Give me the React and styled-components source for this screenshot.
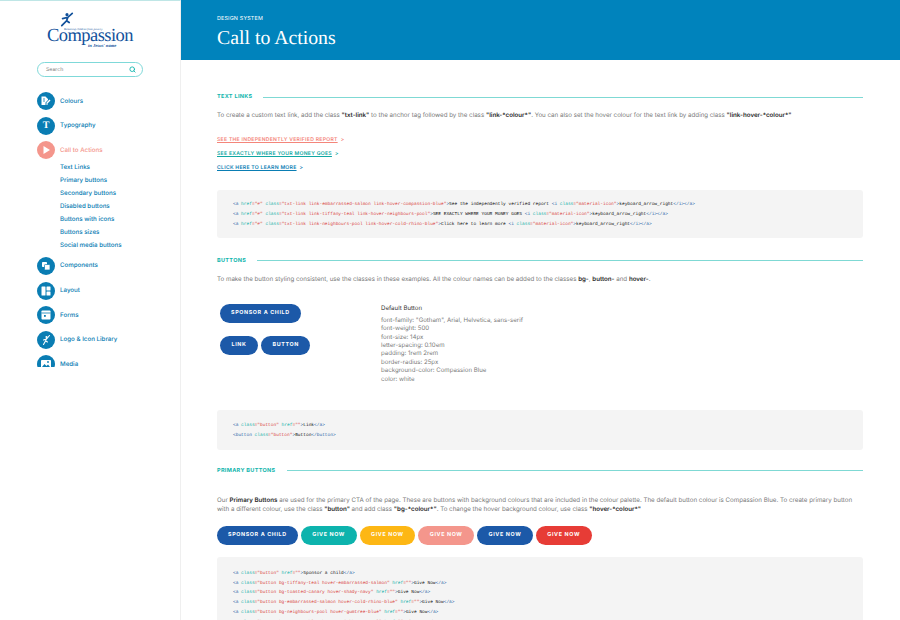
import React from "react";
import styled, { createGlobalStyle } from "styled-components";
import { Search as SearchIcon } from "lucide-react";

const BLUE = "#0a7db3";
const TEAL = "#10b5ad";
const SANS = `Inter, "Open Sans", "Liberation Sans", sans-serif`;

const Global = createGlobalStyle`
  html, body {
    margin: 0;
    height: 100%;
    overflow: hidden;
    background: #fff;
    text-rendering: geometricPrecision;
  }
  * { box-sizing: border-box; }
`;

const navTop = [
  { label: "Colours", icon: "colours" },
  { label: "Typography", icon: "type" },
  { label: "Call to Actions", icon: "play", active: true },
];
const navSub = ["Text Links", "Primary buttons", "Secondary buttons", "Disabled buttons", "Buttons with icons", "Buttons sizes", "Social media buttons"];
const navBottom = [
  { label: "Components", icon: "components" },
  { label: "Layout", icon: "layout" },
  { label: "Forms", icon: "forms" },
  { label: "Logo & Icon Library", icon: "logo" },
  { label: "Media", icon: "media" },
];

const linkCode = [
  `<a href="#" class="txt-link link-embarrassed-salmon link-hover-compassion-blue">See the independently verified report <i class="material-icon">keyboard_arrow_right</i></a>`,
  `<a href="#" class="txt-link link-tiffany-teal link-hover-neighbours-pool">SEE EXACTLY WHERE YOUR MONEY GOES <i class="material-icon">keyboard_arrow_right</i></a>`,
  `<a href="#" class="txt-link link-neighbours-pool link-hover-cold-rhino-blue">Click here to learn more <i class="material-icon">keyboard_arrow_right</i></a>`,
];
const buttonCode = [
  `<a class="button" href="">Link</a>`,
  `<button class="button">Button</button>`,
];
const primaryCode = [
  `<a class="button" href="">Sponsor a child</a>`,
  `<a class="button bg-tiffany-teal hover-embarrassed-salmon" href="">Give Now</a>`,
  `<a class="button bg-toasted-canary hover-shady-navy" href="">Give Now</a>`,
  `<a class="button bg-embarrassed-salmon hover-cold-rhino-blue" href="">Give Now</a>`,
  `<a class="button bg-neighbours-pool hover-gumtree-blue" href="">Give Now</a>`,
  `<a class="button bg-gumtree-blue hover-neighbours-pool" href="">Give Now</a>`,
];
const specs = [
  `font-family: "Gotham", Arial, Helvetica, sans-serif`,
  "font-weight: 500",
  "font-size: 14px",
  "letter-spacing: 0.10em",
  "padding: 1rem 2rem",
  "border-radius: 25px",
  "background-color: Compassion Blue",
  "color: white",
];
const primaryButtons = [
  { label: "SPONSOR A CHILD", bg: "#1c59a8", pad: 11 },
  { label: "GIVE NOW", bg: "#0db3ad", pad: 11.5 },
  { label: "GIVE NOW", bg: "#fdb714", pad: 11.5 },
  { label: "GIVE NOW", bg: "#f4968c", pad: 11.5 },
  { label: "GIVE NOW", bg: "#1c59a8", pad: 11.5 },
  { label: "GIVE NOW", bg: "#e73c36", pad: 11.5 },
];

const Page = styled.div`
  display: grid;
  grid-template-columns: 181px 1fr;
  width: 900px;
  height: 620px;
  overflow: hidden;
  font-family: ${SANS};
`;

const Sidebar = styled.aside`
  height: 620px;
  border-top: 1px solid #bfe6e6;
  border-right: 1px solid #efefef;
  padding: 0 37px;
`;

const Logo = styled.div`
  position: relative;
  width: 88px;
  height: 44px;
  margin: 10px 0 0 10px;
  color: #12519b;
  font-family: "Liberation Serif", serif;
`;
const LogoMark = styled.svg`
  position: absolute;
  left: 13px;
  top: 1px;
`;
const LogoTag = styled.span`
  position: absolute;
  left: 17px;
  top: 15.5px;
  font-size: 3px;
  font-style: italic;
  white-space: nowrap;
`;
const LogoWord = styled.span`
  position: absolute;
  left: 0;
  top: 14px;
  font-size: 18.5px;
  line-height: 22px;
  letter-spacing: -0.55px;
`;
const LogoSub = styled.span`
  position: absolute;
  left: 41px;
  top: 32px;
  font-size: 4.6px;
  font-weight: bold;
  font-style: italic;
  white-space: nowrap;
`;

const SearchBox = styled.div`
  display: flex;
  align-items: center;
  justify-content: space-between;
  width: 106px;
  height: 15px;
  margin-top: 7px;
  padding: 0 6px 0 8px;
  border: 1px solid #7fd9d9;
  border-radius: 8px;
  font-size: 5.2px;
  color: #777;
  svg { color: ${TEAL}; }
`;

const Nav = styled.nav`
  height: 275px;
  margin-top: 15px;
  overflow: hidden;
`;
const NavRow = styled.div`
  display: flex;
  align-items: center;
  gap: 5px;
  height: 18px;
  margin-bottom: 6.6px;
  font-size: 6.2px;
  font-weight: 500;
  color: ${(p) => (p.$active ? "#f4968c" : BLUE)};
`;
const NavCircle = styled.span`
  display: flex;
  align-items: center;
  justify-content: center;
  flex: none;
  width: 18px;
  height: 18px;
  border-radius: 50%;
  background: ${(p) => (p.$active ? "#f4968c" : BLUE)};
  color: #fff;
  font: bold 10px "Liberation Serif", serif;
`;
const SubList = styled.div`
  display: flex;
  flex-direction: column;
  margin: -5px 0 4.5px 23px;
  font-size: 6.2px;
  font-weight: 500;
  color: ${BLUE};
`;
const SubItem = styled.div`
  height: 13.1px;
  line-height: 13.1px;
`;

const Main = styled.main`
  height: 620px;
  overflow: hidden;
`;
const Hero = styled.header`
  height: 60px;
  padding: 15px 36px 0;
  background: #0083bc;
  color: #fff;
`;
const HeroKicker = styled.div`
  font-size: 5.4px;
  line-height: 8px;
  letter-spacing: 0.03em;
`;
const HeroTitle = styled.h1`
  margin: 4px 0 0;
  font: 400 19.8px/22px "Liberation Serif", serif;
`;
const Content = styled.div`
  padding: 0 37px 0 36px;
`;

const SectionHead = styled.div`
  display: flex;
  align-items: center;
  gap: 11px;
  height: 8px;
  margin-top: ${(p) => p.$top}px;
  font-size: 5.5px;
  font-weight: 700;
  letter-spacing: 0.06em;
  color: ${TEAL};
  white-space: nowrap;
  &::after {
    content: "";
    flex: 1;
    height: 1px;
    background: #7fd9d4;
  }
`;
const Para = styled.p`
  margin: ${(p) => p.$top}px 0 0;
  font-size: 6.2px;
  line-height: 9px;
  color: #777;
  white-space: nowrap;
  b { color: #2a2a2a; font-weight: 600; }
`;
const LinkList = styled.div`
  display: flex;
  flex-direction: column;
  gap: 6.8px;
  margin-top: 17px;
`;
const TextLink = styled.a`
  display: block;
  height: 7px;
  line-height: 7px;
  font-size: 5.1px;
  font-weight: 600;
  letter-spacing: 0.055em;
  color: ${(p) => p.$color};
  span {
    text-decoration: underline;
    text-underline-offset: 1px;
  }
  i {
    font-style: normal;
    margin-left: 3px;
  }
`;
const CodeBlock = styled.pre`
  height: ${(p) => p.$height}px;
  margin: ${(p) => p.$top}px 0 0;
  padding: ${(p) => p.$pad}px 16px 0;
  background: #f4f4f4;
  border-radius: 3px;
  font: 4.5px/9.9px "Liberation Mono", monospace;
  color: #111;
  overflow: hidden;
`;
const Tag = styled.span`color: #2a66a8;`;
const Attr = styled.span`color: #12b0a8;`;
const Str = styled.span`color: #d9443f;`;

const Demo = styled.div`
  display: grid;
  grid-template-columns: 161px 1fr;
  height: 104px;
  margin-top: 20px;
  padding-left: 3px;
`;
const DemoButtons = styled.div`
  display: flex;
  flex-direction: column;
  align-items: flex-start;
  gap: 13px;
`;
const ButtonRow = styled.div`
  display: flex;
  gap: 3px;
`;
const PrimaryRow = styled(ButtonRow)`
  margin-top: 12px;
`;
const Button = styled.a`
  display: block;
  height: 19px;
  line-height: 19px;
  padding: 0 ${(p) => p.$pad}px;
  border-radius: 10px;
  background: ${(p) => p.$bg || "#1c59a8"};
  color: #fff;
  font-size: 5.35px;
  font-weight: 700;
  letter-spacing: 0.12em;
  white-space: nowrap;
`;
const Spec = styled.div`
  margin-top: 0;
  font-size: 6.1px;
  line-height: 8.45px;
  color: #7a7a7a;
`;
const SpecTitle = styled.div`
  margin-bottom: 4px;
  color: #333;
  line-height: 9px;
`;

function tokenize(line) {
  // split markup into tags, attribute names, strings and plain text
  const parts = [];
  const re = /(<\/?[a-z]+|>|"[^"]*"|\s[a-z]+(?==)|=)/g;
  let last = 0;
  let inTag = false;
  let m;
  while ((m = re.exec(line))) {
    if (m.index > last) parts.push(["text", line.slice(last, m.index)]);
    const t = m[0];
    if (t.startsWith("<")) {
      inTag = true;
      parts.push(["tag", t]);
    } else if (t === ">") {
      parts.push(["tag", t]);
      inTag = false;
    } else if (t.startsWith('"') || t === "=") {
      parts.push(["str", t]);
    } else {
      parts.push([inTag ? "attr" : "text", t]);
    }
    last = m.index + t.length;
  }
  if (last < line.length) parts.push(["text", line.slice(last)]);
  return parts;
}

function CodeLines({ lines }) {
  return lines.map((line, i) => (
    <div key={i}>
      {tokenize(line).map(([kind, text], j) => {
        if (kind === "tag") return <Tag key={j}>{text}</Tag>;
        if (kind === "attr") return <Attr key={j}>{text}</Attr>;
        if (kind === "str") return <Str key={j}>{text}</Str>;
        return <React.Fragment key={j}>{text}</React.Fragment>;
      })}
    </div>
  ));
}

function NavIcon({ name }) {
  if (name === "type") return "T";
  const shapes = {
    colours: (
      <>
        <path d="M1.500 1.500h4L8 4v1L5.500 7.500V10h-4z" fill="#fff" />
        <path d="M6.500 7.500l3-3 1 1-3 3V10h-1z" fill="#fff" />
        <path d="M3 4h2M3 6h2" stroke="#0a7db3" strokeWidth=".8" />
      </>
    ),
    play: <path d="M3.500 2l6.500 4-6.500 4z" fill="#fff" />,
    components: (
      <>
        <rect x="2" y="2" width="5" height="5" rx=".8" fill="#fff" />
        <rect x="4.500" y="4.500" width="5.500" height="5.500" rx=".8" fill="#fff" stroke="#0a7db3" strokeWidth=".7" />
      </>
    ),
    layout: (
      <>
        <rect x="1.500" y="1.500" width="4" height="9" rx=".5" fill="#fff" />
        <rect x="6.500" y="1.500" width="4" height="4" rx=".5" fill="#fff" />
        <rect x="6.500" y="6.500" width="4" height="4" rx=".5" fill="#fff" />
      </>
    ),
    forms: (
      <>
        <rect x="1.500" y="1.500" width="9" height="9" rx=".8" fill="#fff" />
        <path d="M1.500 4h9" stroke="#0a7db3" strokeWidth=".8" />
        <rect x="4" y="6" width="1.800" height="1.800" fill="#0a7db3" />
      </>
    ),
    logo: (
      <>
        <circle cx="6.500" cy="3" r="1.100" fill="#fff" />
        <path d="M9.500 1.500L6.500 5 3.500 6M6.500 4.500L5.500 7 3.500 10.500M5.500 7l2 1" stroke="#fff" strokeWidth="1.100" fill="none" strokeLinecap="round" />
      </>
    ),
    media: (
      <>
        <rect x="1" y="2" width="10" height="8" rx=".8" fill="#fff" />
        <path d="M2 9l2.500-3 2 2 1.500-1.500L10 9z" fill="#0a7db3" />
        <circle cx="8" cy="4" r=".9" fill="#0a7db3" />
      </>
    ),
  };
  return (
    <svg width="12" height="12" viewBox="0 0 12 12">
      {shapes[name]}
    </svg>
  );
}

function NavItem({ item }) {
  return (
    <NavRow $active={item.active}>
      <NavCircle $active={item.active}>
        <NavIcon name={item.icon} />
      </NavCircle>
      {item.label}
    </NavRow>
  );
}

export default function App() {
  return (
    <Page>
      <Global />
      <Sidebar>
        <Logo>
          <LogoMark width="14" height="15" viewBox="0 0 16 17">
            <circle cx="8" cy="3" r="1.800" fill="#12519b" />
            <path d="M14 1.500L9 6 3 7.500M9 6L7.500 10 2 15.500M7.500 10l3 2" stroke="#12519b" strokeWidth="2" fill="none" strokeLinecap="round" />
          </LogoMark>
          <LogoTag>Releasing children from poverty</LogoTag>
          <LogoWord>Compassion</LogoWord>
          <LogoSub>in Jesus' name</LogoSub>
        </Logo>
        <SearchBox>
          Search
          <SearchIcon size={7} strokeWidth={3} />
        </SearchBox>
        <Nav>
          {navTop.map((item) => (
            <NavItem key={item.label} item={item} />
          ))}
          <SubList>
            {navSub.map((label) => (
              <SubItem key={label}>{label}</SubItem>
            ))}
          </SubList>
          {navBottom.map((item) => (
            <NavItem key={item.label} item={item} />
          ))}
        </Nav>
      </Sidebar>
      <Main>
        <Hero>
          <HeroKicker>DESIGN SYSTEM</HeroKicker>
          <HeroTitle>Call to Actions</HeroTitle>
        </Hero>
        <Content>
          <SectionHead $top={33}>TEXT LINKS</SectionHead>
          <Para $top={10}>
            To create a custom text link, add the class <b>"txt-link"</b> to the anchor tag followed by the class <b>"link-*colour*"</b>. You can also set the hover colour for the text link by adding class <b>"link-hover-*colour*"</b>
          </Para>
          <LinkList>
            <TextLink $color="#f4857a"><span>SEE THE INDEPENDENTLY VERIFIED REPORT</span><i>&gt;</i></TextLink>
            <TextLink $color="#10a8a2"><span>SEE EXACTLY WHERE YOUR MONEY GOES</span><i>&gt;</i></TextLink>
            <TextLink $color="#0a7db3"><span>CLICK HERE TO LEARN MORE</span><i>&gt;</i></TextLink>
          </LinkList>
          <CodeBlock $top={18} $height={48} $pad={10.5}>
            <CodeLines lines={linkCode} />
          </CodeBlock>
          <SectionHead $top={19}>BUTTONS</SectionHead>
          <Para $top={10}>
            To make the button styling consistent, use the classes in these examples. All the colour names can be added to the classes <b>bg-</b>, <b>button-</b> and <b>hover-</b>.
          </Para>
          <Demo>
            <DemoButtons>
              <Button $pad={11}>SPONSOR A CHILD</Button>
              <ButtonRow>
                <Button $pad={11.5}>LINK</Button>
                <Button $pad={11.5}>BUTTON</Button>
              </ButtonRow>
            </DemoButtons>
            <Spec>
              <SpecTitle>Default Button</SpecTitle>
              {specs.map((line) => (
                <div key={line}>{line}</div>
              ))}
            </Spec>
          </Demo>
          <CodeBlock $top={2} $height={40} $pad={11.5}>
            <CodeLines lines={buttonCode} />
          </CodeBlock>
          <SectionHead $top={17}>PRIMARY BUTTONS</SectionHead>
          <Para $top={21}>
            Our <b>Primary Buttons</b> are used for the primary CTA of the page. These are buttons with background colours that are included in the colour palette. The default button colour is Compassion Blue. To create primary button
            <br />
            with a different colour, use the class <b>"button"</b> and add class <b>"bg-*colour*"</b>. To change the hover background colour, use class <b>"hover-*colour*"</b>
          </Para>
          <PrimaryRow>
            {primaryButtons.map((b, i) => (
              <Button key={i} $pad={b.pad} $bg={b.bg}>{b.label}</Button>
            ))}
          </PrimaryRow>
          <CodeBlock $top={12} $height={80} $pad={12}>
            <CodeLines lines={primaryCode} />
          </CodeBlock>
        </Content>
      </Main>
    </Page>
  );
}
